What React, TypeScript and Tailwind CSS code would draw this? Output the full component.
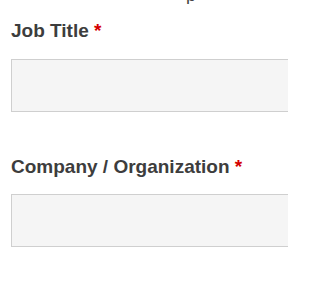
import React from "react";

export default function App() {
  return (
    <div className="w-[288px] h-[288px] overflow-hidden bg-white" style={{ fontFamily: '"Liberation Sans", Arial, sans-serif' }}>
      <div className="pl-[11px]">
        <div className="h-[4px] overflow-hidden relative">
          <div className="absolute left-[175px] top-[-14px] text-[18px] leading-[18px] text-[#444]">p</div>
        </div>
        <label className="block mt-[15px] text-[19px] leading-[23px] font-bold text-[#3d3d3d]">
          Job Title <span className="text-[#d40000]">*</span>
        </label>
        <div className="mt-[17px] w-[300px] h-[53px] border border-[#cfcfcf] bg-[#f5f5f5]" />
        <label className="block mt-[43px] text-[19px] leading-[23px] font-bold text-[#3d3d3d]">
          Company / Organization <span className="text-[#d40000]">*</span>
        </label>
        <div className="mt-[16px] w-[300px] h-[53px] border border-[#cfcfcf] bg-[#f5f5f5]" />
      </div>
    </div>
  );
}
